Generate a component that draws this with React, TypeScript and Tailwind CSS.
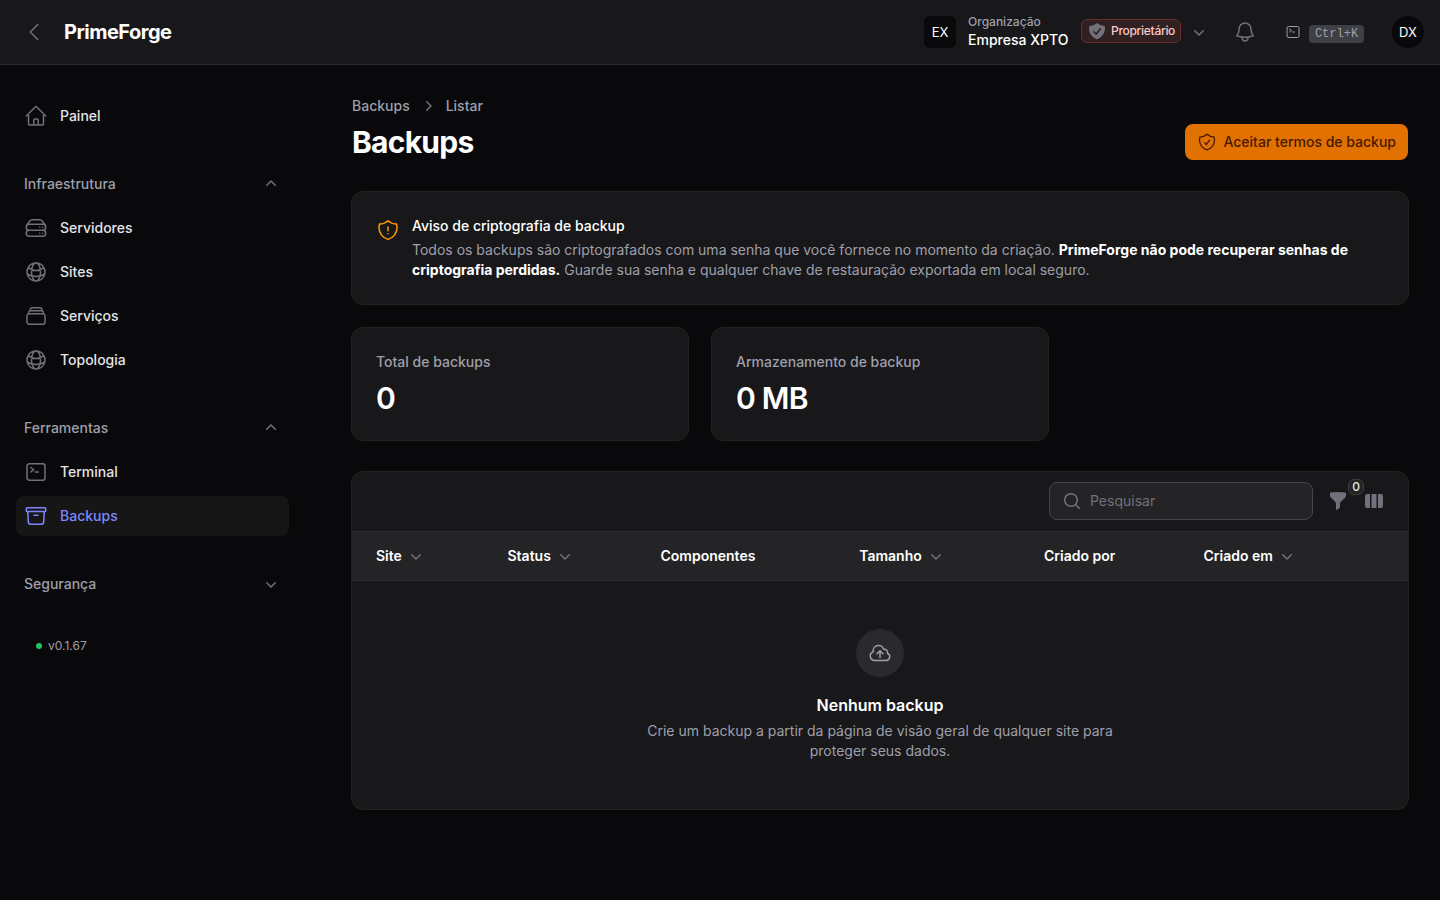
import type { ComponentType } from 'react';
import {
  HiOutlineHome,
  HiOutlineServerStack,
  HiOutlineGlobeAlt,
  HiOutlineRectangleStack,
  HiOutlineCommandLine,
  HiOutlineArchiveBox,
  HiOutlineShieldCheck,
  HiOutlineShieldExclamation,
  HiOutlineBell,
  HiOutlineCloudArrowUp,
  HiOutlineChevronLeft,
  HiMiniChevronDown,
  HiMiniChevronUp,
  HiMiniChevronRight,
  HiMiniMagnifyingGlass,
  HiMiniFunnel,
  HiMiniViewColumns,
  HiMiniShieldCheck,
} from 'react-icons/hi2';

type Icon = ComponentType<{ className?: string }>;
type Item = { label: string; icon: Icon; active?: boolean };
type Group = { label: string; open: boolean; items: Item[] };

const groups: Group[] = [
  {
    label: 'Infraestrutura',
    open: true,
    items: [
      { label: 'Servidores', icon: HiOutlineServerStack },
      { label: 'Sites', icon: HiOutlineGlobeAlt },
      { label: 'Serviços', icon: HiOutlineRectangleStack },
      { label: 'Topologia', icon: HiOutlineGlobeAlt },
    ],
  },
  {
    label: 'Ferramentas',
    open: true,
    items: [
      { label: 'Terminal', icon: HiOutlineCommandLine },
      { label: 'Backups', icon: HiOutlineArchiveBox, active: true },
    ],
  },
  { label: 'Segurança', open: false, items: [] },
];

const columns = [
  { label: 'Site', sortable: true },
  { label: 'Status', sortable: true },
  { label: 'Componentes', sortable: false },
  { label: 'Tamanho', sortable: true },
  { label: 'Criado por', sortable: false },
  { label: 'Criado em', sortable: true },
];

function NavItem({ label, icon: Glyph, active }: Item) {
  return (
    <a
      className={
        active
          ? 'flex h-10 items-center gap-3 rounded-lg bg-[#161616] px-2 text-[#7c86ff]'
          : 'flex h-10 items-center gap-3 rounded-lg px-2 text-[#e4e4e7]'
      }
    >
      <Glyph className={active ? 'size-6' : 'size-6 text-[#71717b]'} />
      <span className="text-sm font-medium">{label}</span>
    </a>
  );
}

function Header() {
  return (
    <header className="flex h-[65px] shrink-0 items-center border-b border-[#29292b] bg-[#18181b] pr-4 pl-[22px]">
      <HiOutlineChevronLeft className="size-6 text-[#71717b]" />
      <div className="ml-[18px] text-xl font-bold tracking-tight text-white">PrimeForge</div>
      <div className="ml-auto flex items-center">
        <div className="flex size-8 items-center justify-center rounded-md bg-[#09090b] pt-px text-[13px] text-white">EX</div>
        <div className="ml-3">
          <div className="text-xs leading-4 font-medium text-[#9f9fa9]">Organização</div>
          <div className="text-sm leading-5 font-medium text-white">Empresa XPTO</div>
        </div>
        <div className="mb-0.5 ml-[12.6px] flex h-6 w-[100px] items-center gap-1 rounded-md border border-[#6b2c30] bg-[#302022] pl-[5px] text-xs font-medium tracking-tight text-[#ffc9c9]">
          <HiMiniShieldCheck className="size-5 shrink-0 text-[#71717b]" />
          Proprietário
        </div>
        <HiMiniChevronDown className="ml-2 size-5 text-[#71717b]" />
        <HiOutlineBell className="ml-6 size-6 text-[#71717b]" />
        <HiOutlineCommandLine className="ml-7 size-4 text-[#9f9fa9]" />
        <kbd className="mt-1 ml-2 flex h-[18px] w-[55px] items-center justify-center rounded bg-[#3f3f46] font-['Liberation_Mono',monospace] text-xs text-[#9f9fa9]">
          Ctrl+K
        </kbd>
        <div className="ml-7 flex size-8 items-center justify-center rounded-full bg-[#09090b] pt-px text-[13px] text-white">DX</div>
      </div>
    </header>
  );
}

function Sidebar() {
  return (
    <aside className="flex w-80 shrink-0 flex-col gap-7 pt-[31px] pr-[31px] pl-4">
      <NavItem label="Painel" icon={HiOutlineHome} />
      {groups.map((group) => (
        <div key={group.label} className="flex flex-col gap-1">
          <div className="flex h-10 items-center justify-between px-2 text-sm font-medium text-[#9f9fa9]">
            {group.label}
            {group.open ? (
              <HiMiniChevronUp className="size-5 text-[#71717b]" />
            ) : (
              <HiMiniChevronDown className="size-5 text-[#71717b]" />
            )}
          </div>
          {group.items.map((item) => (
            <NavItem key={item.label} {...item} />
          ))}
        </div>
      ))}
      <div className="mt-1.5 flex items-center gap-1.5 pl-5 text-xs text-[#9f9fa9]">
        <span className="size-1.5 rounded-full bg-[#22c55e]" />
        v0.1.67
      </div>
    </aside>
  );
}

function Stat({ label, value }: { label: string; value: string }) {
  return (
    <div className="rounded-xl bg-[#18181b] p-6 ring-1 ring-white/10">
      <div className="text-sm font-medium text-[#9f9fa9]">{label}</div>
      <div className="mt-2 text-3xl leading-9 font-semibold tracking-tight text-white">{value}</div>
    </div>
  );
}

function BackupTable() {
  return (
    <section className="mt-8 rounded-xl bg-[#18181b] ring-1 ring-white/10">
      <div className="flex h-[59px] items-start justify-end pt-2.5 pr-6">
        <div className="flex h-[38px] w-[264px] items-center rounded-lg border border-[#464648] bg-[#242426] pl-3 text-sm text-[#71717b]">
          <HiMiniMagnifyingGlass className="mr-2 size-5" />
          Pesquisar
        </div>
        <div className="relative mt-[9px] ml-[15px] text-[#71717b]">
          <HiMiniFunnel className="size-5" />
          <span className="absolute -top-3 left-5 flex h-4 w-4 items-center justify-center rounded-md border border-[#3a3a3d] bg-[#242426] text-xs font-medium text-[#e4e4e7]">
            0
          </span>
        </div>
        <HiMiniViewColumns className="mt-[9px] ml-4 size-5 text-[#71717b]" />
      </div>
      <div className="grid h-[50px] grid-cols-[131.5px_153px_198.7px_184.8px_159.5px_auto] items-center border-y border-[#2f2f32] bg-[#242426] pl-6">
        {columns.map((column) => (
          <div key={column.label} className="flex items-center gap-1 text-sm font-semibold text-white">
            {column.label}
            {column.sortable && <HiMiniChevronDown className="size-5 text-[#71717b]" />}
          </div>
        ))}
      </div>
      <div className="flex flex-col items-center py-12 text-center">
        <div className="flex size-12 items-center justify-center rounded-full bg-[#2a2a2e]">
          <HiOutlineCloudArrowUp className="size-6 text-[#9f9fa9]" />
        </div>
        <div className="mt-4 text-base leading-6 font-semibold text-white">Nenhum backup</div>
        <p className="mt-1 w-[480px] text-sm leading-5 text-[#9f9fa9]">
          Crie um backup a partir da página de visão geral de qualquer site para proteger seus dados.
        </p>
      </div>
    </section>
  );
}

export default function App() {
  return (
    <div className="flex h-screen flex-col overflow-hidden bg-[#09090b] font-['Inter',sans-serif] text-white">
      <Header />
      <div className="flex flex-1">
        <Sidebar />
        <main className="min-w-0 flex-1 px-8 pt-[31px]">
          <nav className="flex h-5 items-center text-sm font-medium text-[#9f9fa9]">
            Backups
            <HiMiniChevronRight className="mx-2 size-5 text-[#71717b]" />
            Listar
          </nav>
          <div className="mt-2 flex h-9 items-center justify-between">
            <h1 className="text-3xl font-bold tracking-tight">Backups</h1>
            <button className="flex h-9 items-center gap-1.5 rounded-lg bg-[#e17100] px-3 text-sm font-medium text-[#461901]">
              <HiOutlineShieldCheck className="size-5" />
              Aceitar termos de backup
            </button>
          </div>
          <section className="mt-8 flex gap-3 rounded-xl bg-[#18181b] p-6 ring-1 ring-white/10">
            <HiOutlineShieldExclamation className="mt-0.5 size-6 shrink-0 text-[#fe9a00]" />
            <div>
              <h2 className="text-sm leading-5 font-medium">Aviso de criptografia de backup</h2>
              <p className="mt-1 text-sm leading-5 text-[#9f9fa9]">
                Todos os backups são criptografados com uma senha que você fornece no momento da criação.{' '}
                <strong className="font-bold text-white">
                  PrimeForge não pode recuperar senhas de criptografia perdidas.
                </strong>{' '}
                Guarde sua senha e qualquer chave de restauração exportada em local seguro.
              </p>
            </div>
          </section>
          <div className="mt-6 grid grid-cols-3 gap-6">
            <Stat label="Total de backups" value="0" />
            <Stat label="Armazenamento de backup" value="0 MB" />
          </div>
          <BackupTable />
        </main>
      </div>
    </div>
  );
}
